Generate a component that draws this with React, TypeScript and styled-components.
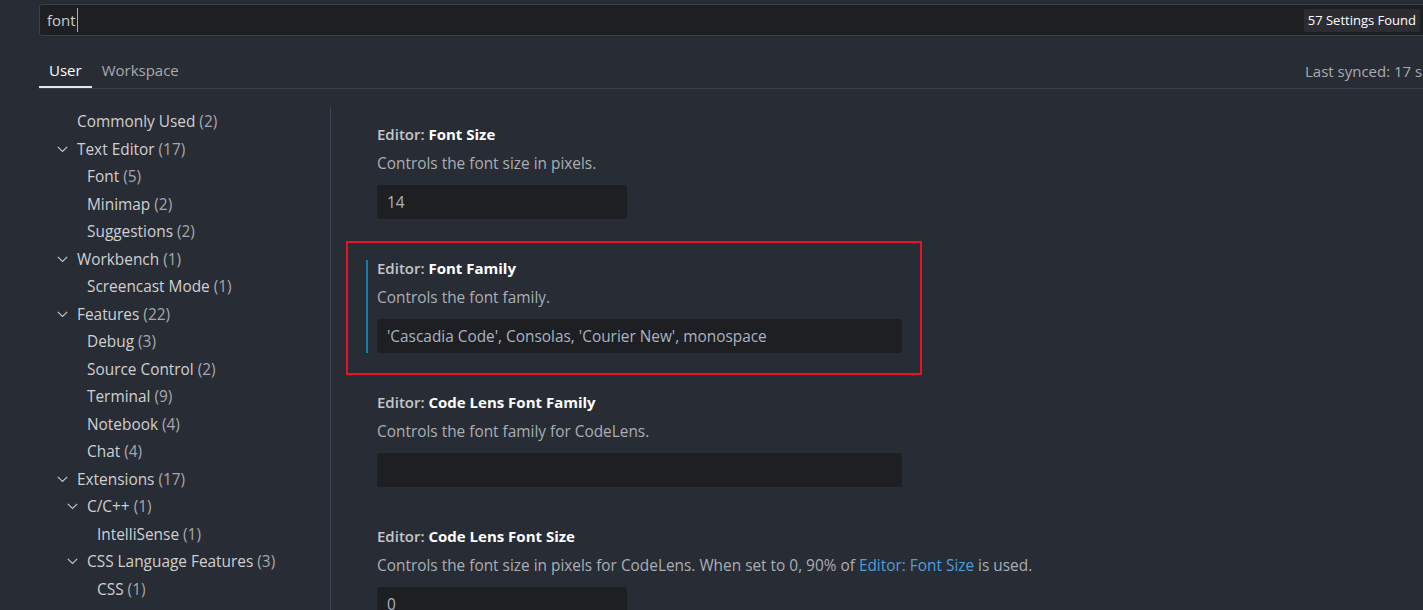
import React from "react";
import styled, { createGlobalStyle } from "styled-components";

const Global = createGlobalStyle`
  html, body { margin: 0; padding: 0; background: #282c34; }
  body { overflow: hidden; }
  * { box-sizing: border-box; }
`;

const FONT = `"Open Sans", "Noto Sans", sans-serif`;

const Page = styled.div`
  width: 1423px;
  height: 610px;
  overflow: hidden;
  background: #282c34;
  font-family: ${FONT};
  color: #cccccc;
  padding-left: 39px;
  display: flex;
  flex-direction: column;
`;

const SearchBox = styled.div`
  margin-top: 4px;
  height: 32px;
  margin-right: -6px;
  background: #1e1f23;
  border: 1px solid #3c4048;
  border-radius: 3px;
  display: flex;
  align-items: center;
  padding-left: 7px;
`;

const SearchText = styled.span`
  font-size: 15px;
  color: #cccccc;
`;

const Caret = styled.span`
  display: inline-block;
  width: 1px;
  height: 24px;
  background: #aeafad;
  margin-left: 1px;
`;

const Badge = styled.div`
  margin-left: auto;
  margin-right: 8px;
  height: 23px;
  padding: 0 4px;
  background: #2b2d33;
  border-radius: 2px;
  display: flex;
  align-items: center;
  font-size: 13px;
  color: #ffffff;
`;

const TabsRow = styled.div`
  margin-top: 17px;
  height: 36px;
  display: flex;
  align-items: stretch;
  border-bottom: 1px solid #3b404a;
`;

const Tab = styled.div<{ $active?: boolean }>`
  padding: 0 10px;
  display: flex;
  align-items: center;
  font-size: 15px;
  color: ${(p) => (p.$active ? "#ffffff" : "#a9abaf")};
  border-bottom: 2px solid ${(p) => (p.$active ? "#e6e6e6" : "transparent")};
`;

const Synced = styled.div`
  margin-left: auto;
  width: 118px;
  overflow: hidden;
  display: flex;
  align-items: center;
  font-size: 15px;
  color: #a9abaf;
  white-space: nowrap;
`;

const Body = styled.div`
  flex: 1;
  margin-top: 18px;
  display: flex;
  min-height: 0;
`;

const Sidebar = styled.div`
  width: 292px;
  padding-top: 1px;
  border-right: 1px solid #3e4450;
  flex-shrink: 0;
`;

const TreeRow = styled.div<{ $depth: number }>`
  height: 27.5px;
  display: flex;
  align-items: center;
  padding-left: ${(p) => 14 + p.$depth * 10}px;
  font-size: 15.4px;
  white-space: nowrap;
`;

const Twistie = styled.span`
  width: 24px;
  flex-shrink: 0;
  display: flex;
  align-items: center;
  padding-left: 4px;
`;

const Name = styled.span`
  color: #cfd0d2;
`;

const Count = styled.span`
  color: #a6a8ad;
  margin-left: 4px;
`;

const Content = styled.div`
  flex: 1;
  padding-left: 15px;
`;

const Setting = styled.div<{ $highlight?: boolean }>`
  width: 576px;
  height: 134px;
  padding: 18px 20px 0 31px;
  position: relative;
  box-shadow: ${(p) => (p.$highlight ? "inset 0 0 0 2px #e81224" : "none")};
`;

const FocusBar = styled.div`
  position: absolute;
  left: 20px;
  top: 19px;
  width: 2px;
  height: 93px;
  background: #127fa8;
`;

const Title = styled.div`
  height: 18px;
  line-height: 18px;
  font-size: 15px;
  font-weight: 600;
  color: #c4c6ca;
`;

const TitleKey = styled.span`
  color: #ffffff;
  font-weight: 700;
`;

const Desc = styled.div`
  margin-top: 12px;
  height: 18px;
  line-height: 18px;
  font-size: 15.4px;
  color: #abaeb4;
  white-space: nowrap;
`;

const Link = styled.span`
  color: #4c9fdb;
`;

const Input = styled.div<{ $wide?: boolean }>`
  margin-top: 12px;
  width: ${(p) => (p.$wide ? 525 : 250)}px;
  height: 34px;
  background: #1e1f23;
  border-radius: 3px;
  display: flex;
  align-items: center;
  padding-left: 10px;
  font-size: 15.4px;
  color: #a9b3c1;
  white-space: nowrap;
`;

const Chevron = () => (
  <svg width="11" height="7" viewBox="0 0 11 7" fill="none">
    <path d="M0.8 0.8 L5.5 5.5 L10.2 0.8" stroke="#c5c6c8" strokeWidth="1.2" />
  </svg>
);

type Node = { name: string; count: number; depth: number; open?: boolean };

const tree: Node[] = [
  { name: "Commonly Used", count: 2, depth: 0 },
  { name: "Text Editor", count: 17, depth: 0, open: true },
  { name: "Font", count: 5, depth: 1 },
  { name: "Minimap", count: 2, depth: 1 },
  { name: "Suggestions", count: 2, depth: 1 },
  { name: "Workbench", count: 1, depth: 0, open: true },
  { name: "Screencast Mode", count: 1, depth: 1 },
  { name: "Features", count: 22, depth: 0, open: true },
  { name: "Debug", count: 3, depth: 1 },
  { name: "Source Control", count: 2, depth: 1 },
  { name: "Terminal", count: 9, depth: 1 },
  { name: "Notebook", count: 4, depth: 1 },
  { name: "Chat", count: 4, depth: 1 },
  { name: "Extensions", count: 17, depth: 0, open: true },
  { name: "C/C++", count: 1, depth: 1, open: true },
  { name: "IntelliSense", count: 1, depth: 2 },
  { name: "CSS Language Features", count: 3, depth: 1, open: true },
  { name: "CSS", count: 1, depth: 2 },
];

export default function App() {
  return (
    <>
      <Global />
      <Page>
        <SearchBox>
          <SearchText>font</SearchText>
          <Caret />
          <Badge>57 Settings Found</Badge>
        </SearchBox>
        <TabsRow>
          <Tab $active>User</Tab>
          <Tab>Workspace</Tab>
          <Synced>Last synced: 17 secs ago</Synced>
        </TabsRow>
        <Body>
          <Sidebar>
            {tree.map((n, i) => (
              <TreeRow key={i} $depth={n.depth}>
                <Twistie>{n.open ? <Chevron /> : null}</Twistie>
                <Name>{n.name}</Name>
                <Count>({n.count})</Count>
              </TreeRow>
            ))}
          </Sidebar>
          <Content>
            <Setting>
              <Title>
                Editor: <TitleKey>Font Size</TitleKey>
              </Title>
              <Desc>Controls the font size in pixels.</Desc>
              <Input>14</Input>
            </Setting>
            <Setting $highlight>
              <FocusBar />
              <Title>
                Editor: <TitleKey>Font Family</TitleKey>
              </Title>
              <Desc>Controls the font family.</Desc>
              <Input $wide>'Cascadia Code', Consolas, 'Courier New', monospace</Input>
            </Setting>
            <Setting>
              <Title>
                Editor: <TitleKey>Code Lens Font Family</TitleKey>
              </Title>
              <Desc>Controls the font family for CodeLens.</Desc>
              <Input $wide />
            </Setting>
            <Setting>
              <Title>
                Editor: <TitleKey>Code Lens Font Size</TitleKey>
              </Title>
              <Desc>
                Controls the font size in pixels for CodeLens. When set to 0, 90% of{" "}
                <Link>Editor: Font Size</Link> is used.
              </Desc>
              <Input>0</Input>
            </Setting>
          </Content>
        </Body>
      </Page>
    </>
  );
}
